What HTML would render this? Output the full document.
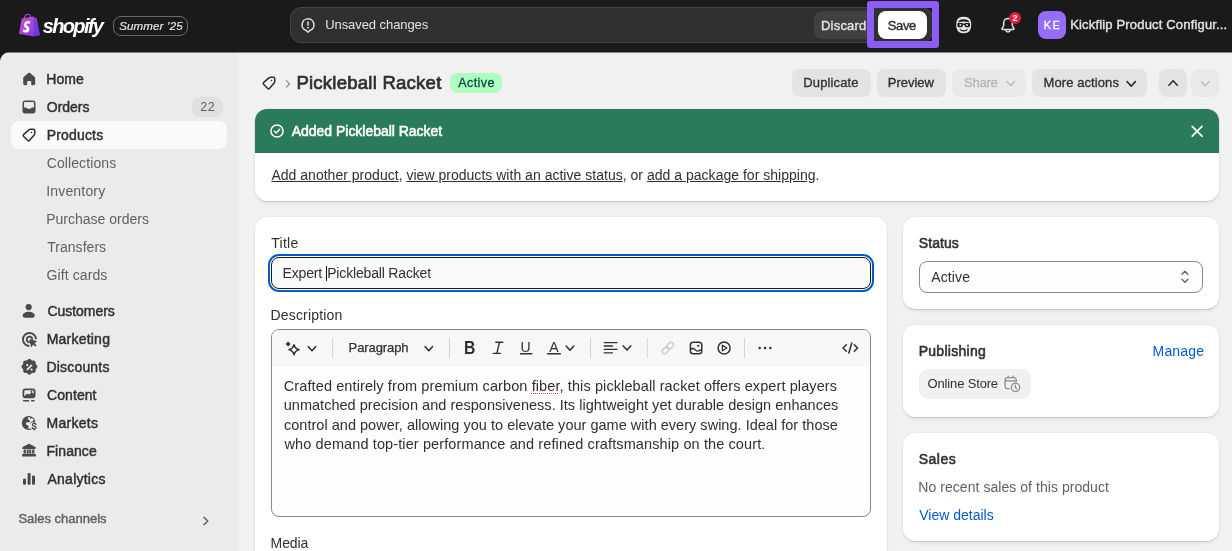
<!DOCTYPE html>
<html lang="en">
<head>
<meta charset="utf-8">
<title>Pickleball Racket · Shopify</title>
<style>
*{box-sizing:border-box;margin:0;padding:0}
html,body{width:1232px;height:551px;overflow:hidden;background:#1a1a1a}
body{font-family:"Liberation Sans",sans-serif;font-size:13px;color:#303030;position:relative}
.abs{position:absolute}
#topbar{will-change:transform;position:absolute;left:0;top:0;width:1232px;height:52px;background:#1a1a1a;z-index:2;box-shadow:0 1px 0 rgba(26,26,26,.5)}
#frame{will-change:transform;position:absolute;left:0;top:52px;width:1232px;height:499px;background:#f1f1f1;border-top-left-radius:10px;overflow:hidden}
#sidebar{position:absolute;left:0;top:0;width:238px;height:499px;background:#ebebeb}
.t{position:absolute;white-space:nowrap;line-height:20px}
.nav{font-size:14px;color:#303030;left:47px;-webkit-text-stroke:.45px #303030}
.bd{left:12px;font-size:14.5px;color:#303030}
.bx{position:absolute;background:#e3e3e3;border-radius:8px;height:28px;top:17px}
.sm{font-size:13px;color:#303030;-webkit-text-stroke:.32px}
.sb{-webkit-text-stroke:.45px}
.sub{font-size:14px;color:#616161;left:47px}
.card{position:absolute;background:#fff;border-radius:12px;box-shadow:0 0 0 .5px rgba(0,0,0,.07),0 1px 0 rgba(0,0,0,.09),0 3px 5px -2px rgba(0,0,0,.1)}
svg{position:absolute;overflow:visible}
</style>
</head>
<body>
<div id="topbar">
  <svg style="left:19px;top:13px" width="21.5" height="24" viewBox="0 0 21.5 24"><defs><linearGradient id="bg1" x1="0" y1="0" x2="1" y2="1"><stop offset="0" stop-color="#d14fc8"/><stop offset=".55" stop-color="#a046dc"/><stop offset="1" stop-color="#6a3be8"/></linearGradient></defs><path d="M5.300 5.200C5.900 2.600 7.600 1 9.300 1.300c1.300.200 2.100 1.400 2.500 3.100" fill="none" stroke="#b24fd0" stroke-width="1.100"/><path d="M2.700 5.600 14.600 3.600 15.800 4.700 17.600 4.900 21 22.200 14.600 23.500 0 20.800Z" fill="url(#bg1)"/><path d="M14.600 3.600 15.800 4.700 17.600 4.900 21 22.200 14.600 23.500Z" fill="#5b2fd6" opacity=".45"/><path d="M11.200 8.600 10.500 10.900s-.8-.4-1.700-.4c-1.400 0-1.500.9-1.500 1.100 0 1.200 3.100 1.600 3.100 4.400 0 2.200-1.400 3.600-3.200 3.600-2.200 0-3.400-1.400-3.400-1.400l.6-2s1.200 1 2.200 1c.6 0 .9-.500.9-.900 0-1.500-2.600-1.600-2.600-4.200 0-2.100 1.500-4.200 4.600-4.200 1.500.100 2.200.600 2.200.600Z" fill="#fff"/></svg>
  <svg style="left:954.3px;top:15px" width="19.4" height="20" viewBox="0 0 20 20" preserveAspectRatio="none"><path fill="#e3e3e3" d="M10 1.700c3.900 0 6.600 1.500 7.300 4.300.5 2 .6 4.700.1 7-.7 3.300-3.200 5.300-7.400 5.300s-6.700-2-7.400-5.300c-.5-2.300-.4-5 .1-7C3.400 3.200 6.100 1.700 10 1.700Z"/><path fill="#1a1a1a" d="M4.300 6.800C5.300 5.100 7.400 4.300 10 4.300s4.700.8 5.700 2.500c.2.350-.1.700-.5.550C13.700 6.800 12 6.500 10 6.500s-3.700.3-5.200.85c-.4.150-.7-.2-.5-.55Z"/><path fill="#1a1a1a" d="M3.500 8.700c0-.45.350-.8.800-.8h3.900c.6 0 1.100.3 1.400.75h.8c.3-.45.800-.75 1.400-.75h3.900c.45 0 .8.350.8.800v1.900c0 .9-.7 1.600-1.600 1.600h-2.400c-.9 0-1.600-.7-1.600-1.600v-.6h-1.800v.6c0 .9-.7 1.600-1.600 1.600H5.100c-.9 0-1.600-.7-1.600-1.600V8.700Z"/><circle cx="6.600" cy="10" r="1.050" fill="#e3e3e3"/><circle cx="13.400" cy="10" r="1.050" fill="#e3e3e3"/><path fill="#1a1a1a" d="M6.300 14.100c1 .8 2.300 1.200 3.700 1.200s2.700-.4 3.700-1.200c.3-.25.750.1.500.450-.9 1.200-2.400 1.900-4.200 1.900s-3.300-.7-4.200-1.900c-.25-.350.200-.7.500-.450Z"/></svg>
  <svg style="left:998px;top:15px" width="20" height="20" viewBox="0 0 20 20" fill="#e3e3e3"><path fill-rule="evenodd" d="M10 2.800a5.100 5.100 0 0 0-5.100 5.100v2.300c0 .45-.15.900-.4 1.250l-1 1.400c-.75 1.050 0 2.500 1.300 2.500h2.250a3 3 0 0 0 5.900 0h2.250c1.300 0 2.050-1.450 1.300-2.500l-1-1.400a2.150 2.150 0 0 1-.4-1.250V7.900A5.100 5.100 0 0 0 10 2.800Zm1.400 12.550H8.600a1.500 1.500 0 0 0 2.800 0ZM6.400 7.900a3.600 3.600 0 0 1 7.200 0v2.300c0 .76.240 1.500.68 2.120l1 1.400a.1.100 0 0 1-.08.130H4.800a.1.100 0 0 1-.08-.13l1-1.400c.44-.62.680-1.360.680-2.120V7.900Z"/></svg>
  <div class="abs" style="left:1009px;top:12px;width:12px;height:12px;background:#e51c3a;border-radius:6px"></div>
  <div class="t" style="left:1012.5px;top:12.5px;font-size:9px;line-height:11px;font-weight:bold;color:#fff">2</div>
  <div class="t" style="left:42.8px;top:14px;font-size:20px;line-height:24px;font-weight:bold;font-style:italic;color:#fff;letter-spacing:-1.67px">shopify</div>
  <div class="abs" style="left:113px;top:16px;width:75px;height:20px;border:1px solid #6a6a6a;border-radius:8px"></div>
  <div class="t" style="left:119.2px;top:16px;font-size:11.5px;font-style:italic;color:#e3e3e3;-webkit-text-stroke:.2px;letter-spacing:0.16px">Summer ’25</div>
  <div class="abs" style="left:290px;top:7px;width:643px;height:36px;background:#303030;border:1px solid #454545;border-radius:11px"></div>
  <svg style="left:298px;top:15px" width="20" height="20" viewBox="0 0 20 20" fill="#e3e3e3"><path d="M10 6.250a.75.75 0 0 1 .75.750v3a.75.75 0 0 1-1.500 0V7a.75.75 0 0 1 .75-.750Z"/><circle cx="10" cy="12.600" r=".95"/><path fill-rule="evenodd" d="M3.300 9.800a6.700 6.700 0 1 1 9.100 6.250l-1.650 1.500a1.100 1.100 0 0 1-1.500 0l-1.650-1.500A6.700 6.700 0 0 1 3.300 9.800Zm6.700-5.200a5.200 5.200 0 0 0-1.800 10.080l.27.100L10 16.200l1.530-1.420.27-.1A5.200 5.200 0 0 0 10 4.600Z"/></svg>
  <div class="t" style="left:325.2px;top:15px;font-size:13px;color:#e3e3e3;letter-spacing:-0.07px">Unsaved changes</div>
  <div class="abs" style="left:814px;top:11px;width:60px;height:28px;background:#404040;border-radius:8px"></div>
  <div class="t" style="left:821.0px;top:16px;font-size:13px;color:#e3e3e3;-webkit-text-stroke:.4px;letter-spacing:0.21px">Discard</div>
  <div class="abs" style="left:867px;top:1px;width:72px;height:47px;border:7px solid #8b5cf6;border-radius:3px"></div>
  <div class="abs" style="left:878px;top:11px;width:48.5px;height:28px;background:#fff;border-radius:8px"></div>
  <div class="t" style="left:887.8px;top:16px;font-size:13px;color:#303030;-webkit-text-stroke:.4px;letter-spacing:-0.39px">Save</div>
  <div class="abs" style="left:1038px;top:11px;width:28px;height:28px;background:#956dfb;border-radius:8px"></div>
  <div class="t" style="left:1043.8px;top:14.5px;font-size:11px;color:#fff;-webkit-text-stroke:.3px;letter-spacing:1.37px">KE</div>
  <div class="t" style="left:1070.2px;top:15px;font-size:13px;color:#e3e3e3;-webkit-text-stroke:.4px;letter-spacing:0.17px">Kickflip Product Configur...</div>
</div>
<div id="frame">
 <div id="sidebar">
  <div class="abs" style="left:11px;top:69px;width:216px;height:28px;background:#fafafa;border-radius:8px"></div>
<svg style="left:19.8px;top:17.5px" width="18.4" height="18.4" viewBox="0 0 20 20" fill="#4a4a4a" ><path d="M10.95 3.35a1.45 1.45 0 0 0-1.9 0L4 7.7a1.5 1.5 0 0 0-.5 1.1v5.95c0 .97.78 1.75 1.75 1.75h1.5c.55 0 1-.45 1-1v-2.25c0-.69.56-1.25 1.25-1.25h2c.69 0 1.25.56 1.25 1.25v2.25c0 .55.45 1 1 1h1.5c.97 0 1.75-.78 1.75-1.75V8.8a1.5 1.5 0 0 0-.5-1.1l-5.05-4.35Z"/></svg>
<svg style="left:19px;top:45px" width="20" height="20" viewBox="0 0 20 20" fill="#4a4a4a" ><path fill-rule="evenodd" d="M6.25 3.5h7.5a2.75 2.75 0 0 1 2.75 2.75v7.5a2.75 2.75 0 0 1-2.75 2.75h-7.5a2.75 2.75 0 0 1-2.75-2.75v-7.5a2.75 2.75 0 0 1 2.75-2.75ZM5 6.25v4.25h1.9c.4 0 .75.2.95.55l.25.45c.1.15.25.25.45.25h2.9c.2 0 .35-.1.45-.25l.25-.45c.2-.35.55-.55.95-.55h1.9v-4.25c0-.69-.56-1.25-1.25-1.25h-7.5c-.69 0-1.25.56-1.25 1.25Z"/></svg>
<svg style="left:19px;top:73px" width="20" height="20" viewBox="0 0 20 20" fill="#303030" ><path d="M13.257 7.491a.75.75 0 1 1-1.5 0 .75.75 0 0 1 1.5 0Z"/><path fill-rule="evenodd" d="M11.257 3.5c-.579 0-1.138.211-1.572.594l-5.38 4.747a2.25 2.25 0 0 0-.124 3.27l3.685 3.718a2.25 2.25 0 0 0 3.285-.096l4.758-5.377a2.375 2.375 0 0 0 .596-1.574v-2.907a2.375 2.375 0 0 0-2.375-2.375h-2.873Zm-.58 1.719a.875.875 0 0 1 .58-.219h2.873c.483 0 .875.392.875.875v2.907a.875.875 0 0 1-.22.58l-4.758 5.377a.75.75 0 0 1-1.095.032l-3.685-3.718a.75.75 0 0 1 .041-1.09l5.39-4.744Z"/></svg>
<svg style="left:18.3px;top:248.1px" width="21.4" height="21.4" viewBox="0 0 20 20" fill="#4a4a4a" ><circle cx="10" cy="6.6" r="2.9"/><path d="M4.3 14.6c0-2 2.4-3.7 5.7-3.7s5.7 1.7 5.7 3.7c0 1.1-.9 2-2 2H6.3a2 2 0 0 1-2-2Z"/></svg>
<svg style="left:18.7px;top:276.7px" width="21" height="21" viewBox="0 0 20 20" fill="#4a4a4a" ><g fill="none" stroke="#4a4a4a" stroke-width="1.8" stroke-linecap="round"><path d="M16.2 9.2A6.25 6.25 0 1 0 9.2 16.2"/><path d="M12.7 9.3a2.75 2.75 0 1 0-3.4 3.4"/></g><path d="M10.6 10.1a.4.4 0 0 1 .5-.5l5.7 2a.4.4 0 0 1 .05.73l-2.2 1.1 1.75 1.75a.5.5 0 0 1 0 .7l-.55.55a.5.5 0 0 1-.7 0l-1.75-1.75-1.1 2.2a.4.4 0 0 1-.73-.05l-2-5.7Z"/></svg>
<svg style="left:17.6px;top:303.6px" width="22.8" height="22.8" viewBox="0 0 20 20" fill="#4a4a4a" ><path fill-rule="evenodd" d="M11.6 3.2a2.2 2.2 0 0 0-3.2 0l-.4.45a.7.7 0 0 1-.56.23l-.6-.03a2.2 2.2 0 0 0-2.3 2.3l.03.6a.7.7 0 0 1-.23.56l-.45.4a2.2 2.2 0 0 0 0 3.25l.45.4a.7.7 0 0 1 .23.56l-.03.6a2.2 2.2 0 0 0 2.3 2.3l.6-.03a.7.7 0 0 1 .56.23l.4.45a2.2 2.2 0 0 0 3.25 0l.4-.45a.7.7 0 0 1 .56-.23l.6.03a2.2 2.2 0 0 0 2.3-2.3l-.03-.6a.7.7 0 0 1 .23-.56l.45-.4a2.2 2.2 0 0 0 0-3.25l-.45-.4a.7.7 0 0 1-.23-.56l.03-.6a2.2 2.2 0 0 0-2.3-2.3l-.6.03a.7.7 0 0 1-.56-.23l-.4-.45ZM12.3 7.7a.75.75 0 0 1 0 1.06l-3.5 3.5a.75.75 0 0 1-1.06-1.06l3.5-3.5a.75.75 0 0 1 1.06 0ZM8.1 9a.95.95 0 1 0 0-1.9.95.95 0 0 0 0 1.9Zm3.8 3.9a.95.95 0 1 0 0-1.9.95.95 0 0 0 0 1.9Z"/></svg>
<svg style="left:19px;top:333px" width="20" height="20" viewBox="0 0 20 20" fill="#4a4a4a" ><path fill-rule="evenodd" d="M6.2 3.4A2.7 2.7 0 0 0 3.5 6.1v4.4a2.7 2.7 0 0 0 2.7 2.7h7.6a2.7 2.7 0 0 0 2.7-2.7V6.1a2.7 2.7 0 0 0-2.7-2.7H6.2ZM5.3 6.3a1.1 1.1 0 0 1 1.1-1.1h7.2a1.1 1.1 0 0 1 1.1 1.1v2.6l-1.3-1.1a1.1 1.1 0 0 0-1.450.04L10 9.7l-.800-.650a1.1 1.1 0 0 0-1.400.02L5.3 11.2V6.3Zm7.2 1.1a.900.9 0 1 0 0-1.800.900.9 0 0 0 0 1.8Z"/><path d="M4.7 14.9h4.9a.800.8 0 0 1 0 1.6H4.7a.800.8 0 0 1 0-1.6Zm8 0h2.2a.800.8 0 0 1 0 1.6h-2.2a.800.8 0 0 1 0-1.6Z"/></svg>
<svg style="left:19px;top:361px" width="20" height="20" viewBox="0 0 20 20" fill="#4a4a4a" ><circle cx="9.7" cy="10" r="6.9"/><path fill="#ebebeb" d="M9 4.6c-.500 1.2-.100 2 1 2.3 1 .300 1.300.9 1 1.6-.400.8-1.300.9-2.200.8-1-.100-1.700.4-1.8 1.3-.100.900.5 1.5 1.4 1.7 1 .200 1.400.9 1.2 1.8l-.500 1.7c.800.1 1.7 0 2.5-.300V9.5l3.5-2.5A6 6 0 0 0 12.5 4.9l-.600 1-.900-.300.3-1.2A6 6 0 0 0 9 4.6Z"/><circle cx="15.2" cy="13" r="4.3" fill="#ebebeb"/><path d="M15.2 8.9a.650.65 0 0 1 .650.65v.300c.850.15 1.500.7 1.7 1.45a.650.65 0 1 1-1.250.35c-.100-.350-.450-.600-1.1-.600-.800 0-1.100.35-1.100.65 0 .300.150.55 1.250.8 1.200.25 2.250.8 2.25 2.1 0 1-.700 1.7-1.75 1.9v.300a.650.65 0 0 1-1.3 0v-.300c-.950-.150-1.65-.750-1.85-1.6a.650.65 0 1 1 1.25-.300c.100.400.500.7 1.250.700.85 0 1.15-.400 1.15-.750 0-.350-.150-.600-1.25-.850-1.15-.250-2.25-.750-2.25-2.05 0-.950.7-1.65 1.7-1.85v-.300a.650.65 0 0 1 .650-.650Z"/></svg>
<svg style="left:19px;top:389px" width="20" height="20" viewBox="0 0 20 20" fill="#4a4a4a" ><path d="M9.4 3a1.35 1.35 0 0 1 1.2 0l5.4 2.7c.500.250.750.700.75 1.2 0 .650-.500 1.1-1.15 1.1H4.4c-.650 0-1.15-.450-1.15-1.1 0-.500.25-.950.75-1.2L9.4 3Z"/><path d="M4.6 8.6h2.25v3.8H4.6zM7.75 8.6h2v3.8h-2zM10.25 8.6h2v3.8h-2zM13.15 8.6h2.25v3.8h-2.25z"/><path d="M4.3 12.7h11.4c.700 0 1.250.55 1.25 1.25v.700a.900.9 0 0 1-.900.9H3.95a.900.9 0 0 1-.900-.900v-.700c0-.700.55-1.25 1.25-1.25Z"/></svg>
<svg style="left:19px;top:417px" width="20" height="20" viewBox="0 0 20 20" fill="#4a4a4a" ><rect x="4" y="9.6" width="3" height="6.1" rx="1.2"/><rect x="8.6" y="4" width="3" height="11.7" rx="1.2"/><rect x="13" y="6.6" width="3" height="9.1" rx="1.2"/></svg>
<svg style="left:195.7px;top:458.8px" width="20" height="20" viewBox="0 0 20 20" fill="#4a4a4a" ><path fill="none" stroke="#616161" stroke-width="1.5" stroke-linecap="round" stroke-linejoin="round" d="M8 6.25 11.75 10 8 13.75"/></svg>
  <div class="t nav" style="left:46.3px;top:17px;letter-spacing:0.04px">Home</div>
  <div class="t nav" style="left:46.8px;top:45px;letter-spacing:-0.04px">Orders</div>
  <div class="abs" style="left:192px;top:45px;width:31px;height:20px;background:#e0e0e0;border-radius:8px"></div>
  <div class="t" style="left:200.2px;top:45px;font-size:12.5px;color:#616161;letter-spacing:.7px">22</div>
  <div class="t nav" style="left:46.7px;top:73px;letter-spacing:0.17px">Products</div>
  <div class="t sub" style="left:46.7px;top:101px;letter-spacing:0.10px">Collections</div>
  <div class="t sub" style="left:46.2px;top:129px;letter-spacing:0.18px">Inventory</div>
  <div class="t sub" style="left:46.2px;top:157px">Purchase orders</div>
  <div class="t sub" style="left:47.2px;top:185px;letter-spacing:0.04px">Transfers</div>
  <div class="t sub" style="left:46.6px;top:213px;letter-spacing:0.09px">Gift cards</div>
  <div class="t nav" style="left:47.4px;top:249px;letter-spacing:-0.04px">Customers</div>
  <div class="t nav" style="left:46.7px;top:277px;letter-spacing:0.22px">Marketing</div>
  <div class="t nav" style="left:46.5px;top:305px;letter-spacing:0.18px">Discounts</div>
  <div class="t nav" style="left:47.0px;top:333px;letter-spacing:0.08px">Content</div>
  <div class="t nav" style="left:46.5px;top:361px;letter-spacing:0.28px">Markets</div>
  <div class="t nav" style="left:46.5px;top:389px;letter-spacing:0.06px">Finance</div>
  <div class="t nav" style="left:47.5px;top:417px;letter-spacing:0.24px">Analytics</div>
  <div class="t" style="left:18.4px;top:457px;font-size:13px;color:#616161;-webkit-text-stroke:.4px">Sales channels</div>
 </div>
 <div id="main" class="abs" style="left:238px;top:0;width:994px;height:499px">
  <!-- page header (coords relative to #main: x-238, y-52) -->
  <div class="t" style="left:58.4px;top:19px;font-size:18.6px;color:#303030;line-height:24px;-webkit-text-stroke:.7px;letter-spacing:0.21px">Pickleball Racket</div>
  <div class="abs" style="left:212px;top:21px;width:52px;height:20px;background:#affebf;border-radius:8px"></div>
  <div class="t" style="left:220.3px;top:21px;font-size:12.5px;color:#014b40;-webkit-text-stroke:.3px #014b40;letter-spacing:0.40px">Active</div>
  <div class="bx" style="left:554px;width:79px"></div><div class="t sm" style="left:565.3px;top:21px;letter-spacing:0.12px">Duplicate</div>
  <div class="bx" style="left:639px;width:69px"></div><div class="t sm" style="left:649.8px;top:21px;letter-spacing:-0.02px">Preview</div>
  <div class="bx" style="left:714px;width:74px;background:#e9e9e9"></div><div class="t sm" style="left:726.1px;top:21px;color:#b5b5b5;letter-spacing:-0.27px">Share</div>
  <div class="bx" style="left:794px;width:115px"></div><div class="t sm" style="left:805.6px;top:21px;letter-spacing:0.08px">More actions</div>
  <div class="bx" style="left:921px;width:28px"></div>
  <div class="bx" style="left:953px;width:28px;background:#e9e9e9"></div>
  <svg style="left:21.2px;top:21px" width="20" height="20" viewBox="0 0 20 20" fill="#303030"><path d="M13.257 7.491a.75.75 0 1 1-1.5 0 .75.75 0 0 1 1.5 0Z"/><path fill-rule="evenodd" d="M11.257 3.5c-.579 0-1.138.211-1.572.594l-5.38 4.747a2.25 2.25 0 0 0-.124 3.27l3.685 3.718a2.25 2.25 0 0 0 3.285-.096l4.758-5.377a2.375 2.375 0 0 0 .596-1.574v-2.907a2.375 2.375 0 0 0-2.375-2.375h-2.873Zm-.58 1.719a.875.875 0 0 1 .58-.219h2.873c.483 0 .875.392.875.875v2.907a.875.875 0 0 1-.22.58l-4.758 5.377a.75.75 0 0 1-1.095.032l-3.685-3.718a.75.75 0 0 1 .041-1.09l5.39-4.744Z"/></svg>
  <svg style="left:0;top:0" width="1" height="1"><path d="M48.4 28.7 51.6 31.9 48.4 35.1" fill="none" stroke="#8a8a8a" stroke-width="1.2" stroke-linecap="round" stroke-linejoin="round"/></svg>
  <svg style="left:0;top:0" width="1" height="1"><path d="M769 29.6 772.8 33.6 776.6 29.6" fill="none" stroke="#bdbdbd" stroke-width="1.4" stroke-linecap="round" stroke-linejoin="round"/></svg>
  <svg style="left:0;top:0" width="1" height="1"><path d="M889 29.6 893.2 34.1 897.4 29.6" fill="none" stroke="#303030" stroke-width="1.6" stroke-linecap="round" stroke-linejoin="round"/></svg>
  <svg style="left:0;top:0" width="1" height="1"><path d="M930.9 33.2 935.1 28.7 939.3 33.2" fill="none" stroke="#303030" stroke-width="1.6" stroke-linecap="round" stroke-linejoin="round"/></svg>
  <svg style="left:0;top:0" width="1" height="1"><path d="M963.4 29.8 967.2 33.8 971 29.8" fill="none" stroke="#bdbdbd" stroke-width="1.4" stroke-linecap="round" stroke-linejoin="round"/></svg>
  <!-- banner -->
  <div class="card" style="left:17px;top:57px;width:964px;height:92px;overflow:hidden">
    <div class="abs" style="left:0;top:0;width:964px;height:44px;background:#2a7b5c"></div>
    <svg style="left:12px;top:12px" width="20" height="20" viewBox="0 0 20 20"><circle cx="10" cy="10" r="6.1" fill="none" stroke="#fff" stroke-width="1.5"/><path d="M7.4 10.2 9.2 12 12.700 8.300" fill="none" stroke="#fff" stroke-width="1.5" stroke-linecap="round" stroke-linejoin="round"/></svg>
    <svg style="left:932px;top:12px" width="20" height="20" viewBox="0 0 20 20"><path d="M5.200 5.300 15 15.100M15 5.300 5.200 15.100" fill="none" stroke="#fff" stroke-width="1.700" stroke-linecap="round"/></svg>
    <div class="t" style="left:36.8px;top:12px;font-size:14px;color:#fff;-webkit-text-stroke:.55px;letter-spacing:-0.03px">Added Pickleball Racket</div>
    <div class="t" style="left:16.4px;top:56px;font-size:14px;color:#303030;letter-spacing:0.02px"><u>Add another product</u>, <u>view products with an active status</u>, or <u>add a package for shipping</u>.</div>
  </div>
  <!-- title/description card -->
  <div class="card" style="left:17px;top:165px;width:632px;height:360px">
    <div class="t" style="left:16.2px;top:16px;font-size:14px;letter-spacing:0.30px">Title</div>
    <div class="abs" style="left:13px;top:37px;width:606px;height:38px;border:2px solid #005bd3;border-radius:11px"></div>
    <div class="abs" style="left:16px;top:40px;width:600px;height:32px;border:1px solid #1a1a1a;border-radius:8px;background:#fafafa"></div>
    <div class="t" style="left:27.5px;top:46px;font-size:14px;letter-spacing:-0.16px">Expert </div>
    <div class="t" style="left:72.2px;top:46px;font-size:14px;letter-spacing:-0.17px">Pickleball Racket</div>
    <div class="abs" style="left:70.8px;top:48.5px;width:1.2px;height:15px;background:#111"></div>
    <div class="t" style="left:15.5px;top:88px;font-size:14px;letter-spacing:0.17px">Description</div>
    <div class="abs" style="left:16px;top:112px;width:600px;height:188px;border:1px solid #8a8a8a;border-radius:8px;background:#fdfdfd;overflow:hidden">
      <div class="abs" style="left:0;top:0;width:598px;height:36px;background:#f7f7f7"></div>
<!--tb-->
      <svg style="left:0;top:0" width="598" height="36" viewBox="0 0 598 36">
<path d="M60.6 8V28" stroke="#d4d4d4" stroke-width="1"/><path d="M177.5 8V28" stroke="#d4d4d4" stroke-width="1"/><path d="M318.5 8V28" stroke="#d4d4d4" stroke-width="1"/><path d="M375.4 8V28" stroke="#d4d4d4" stroke-width="1"/><path d="M472.5 8V28" stroke="#d4d4d4" stroke-width="1"/><path d="M22.00 14.80Q23.00 18.80 27.00 19.80Q23.00 20.80 22.00 24.80Q21.00 20.80 17.00 19.80Q21.00 18.80 22.00 14.80Z" fill="none" stroke="#303030" stroke-width="1.5" stroke-linejoin="round"/><path d="M16.10 11.60Q17.23 12.98 18.60 14.10Q17.23 15.23 16.10 16.60Q14.98 15.23 13.60 14.10Q14.98 12.98 16.10 11.60Z" fill="#303030"/><path d="M36.2 16.5 40.0 20.7 43.8 16.5" fill="none" stroke="#303030" stroke-width="1.5" stroke-linecap="round" stroke-linejoin="round"/><path d="M153.0 16.5 156.8 20.7 160.6 16.5" fill="none" stroke="#303030" stroke-width="1.5" stroke-linecap="round" stroke-linejoin="round"/><path d="M223.8 12.2h7M221.4 23.4h7M227.6 12.2 224.8 23.4" fill="none" stroke="#303030" stroke-width="1.4" stroke-linecap="round"/><path d="M248.6 23.8h11.2M275.6 23.8h12.8" stroke="#303030" stroke-width="1.4" stroke-linecap="round"/><path d="M294.2 16.1 298.0 20.3 301.8 16.1" fill="none" stroke="#303030" stroke-width="1.5" stroke-linecap="round" stroke-linejoin="round"/><path d="M332.2 12.6h12.8" stroke="#303030" stroke-width="1.3" stroke-linecap="round"/><path d="M332.2 16.0h8.3" stroke="#303030" stroke-width="1.3" stroke-linecap="round"/><path d="M332.2 19.4h12.8" stroke="#303030" stroke-width="1.3" stroke-linecap="round"/><path d="M332.2 22.8h8.3" stroke="#303030" stroke-width="1.3" stroke-linecap="round"/><path d="M351.2 15.9 355.0 20.1 358.8 15.9" fill="none" stroke="#303030" stroke-width="1.5" stroke-linecap="round" stroke-linejoin="round"/><g transform="translate(395.8 18.0) rotate(-45)" fill="none" stroke="#cccccc" stroke-width="1.4"><rect x="-7" y="-2.4" width="7.6" height="4.8" rx="2.4"/><rect x="-.6" y="-2.4" width="7.6" height="4.8" rx="2.4"/></g><rect x="418.4" y="12.3" width="11.4" height="11.4" rx="2.8" fill="none" stroke="#303030" stroke-width="1.5"/><circle cx="426.2" cy="15.8" r="1.1" fill="#303030"/><path d="M418.6 19.6c1.5-1.4 3-1.4 4.3-.2 1.3 1.2 2.5 2.3 3.6 1.6 1.1-.7 2.1-1.600 3.2-.6" fill="none" stroke="#303030" stroke-width="1.4"/><circle cx="452.1" cy="18.0" r="6" fill="none" stroke="#303030" stroke-width="1.5"/><path d="M450.4 15.2v5.6l4.500-2.8Z" fill="none" stroke="#303030" stroke-width="1.3" stroke-linejoin="round"/><circle cx="487.7" cy="17.9" r="1.25" fill="#303030"/><circle cx="493.0" cy="17.9" r="1.25" fill="#303030"/><circle cx="498.3" cy="17.9" r="1.25" fill="#303030"/><path d="M574.3 14.7l-3.3 3.3 3.3 3.3M582.3 14.7l3.3 3.3-3.3 3.3M579.8 13.0l-3 10" fill="none" stroke="#303030" stroke-width="1.5" stroke-linecap="round" stroke-linejoin="round"/></svg>
      <div class="t" style="left:192.3px;top:8.4px;font-size:17.5px;font-weight:bold;color:#303030;transform:scaleX(.9);transform-origin:0 0">B</div>
      <div class="t" style="left:248.5px;top:6.7px;font-size:14px;color:#303030">U</div>
      <div class="t" style="left:277.3px;top:6.7px;font-size:14px;color:#303030">A</div>
<!--/tb-->
      <div class="t" style="left:76.6px;top:8px;font-size:13px;color:#303030;letter-spacing:-0.09px;-webkit-text-stroke:.25px">Paragraph</div>
      <div class="t bd" style="left:11.8px;top:46px;letter-spacing:0.10px">Crafted entirely from premium carbon fiber, this pickleball racket offers expert players</div>
      <div class="t bd" style="left:11.7px;top:65px;letter-spacing:0.03px">unmatched precision and responsiveness. Its lightweight yet durable design enhances</div>
      <div class="t bd" style="left:12.0px;top:84.5px;letter-spacing:0.02px">control and power, allowing you to elevate your game with every swing. Ideal for those</div>
      <div class="t bd" style="left:12.5px;top:103.5px;letter-spacing:0.11px">who demand top-tier performance and refined craftsmanship on the court.</div>
      <div class="abs" style="left:259px;top:63px;width:27px;height:0;border-top:1.5px dotted #e0383e"></div>
    </div>
    <div class="t" style="left:15.6px;top:316px;font-size:14px;letter-spacing:-0.13px">Media</div>
  </div>
  <!-- right column -->
  <div class="card" style="left:665px;top:165px;width:316px;height:92px">
    <div class="t" style="left:15.8px;top:16px;font-size:14px;-webkit-text-stroke:.55px;letter-spacing:0.07px">Status</div>
    <div class="abs" style="left:16px;top:44px;width:284px;height:32px;border:1px solid #8a8a8a;border-radius:8px;background:#fdfdfd"></div>
    <div class="t" style="left:28.2px;top:50px;font-size:14px;letter-spacing:0.14px">Active</div>
    <svg style="left:0;top:0" width="1" height="1"><path d="M278.9 57.2 281.9 54.3 284.9 57.2M278.9 62.3 281.9 65.2 284.9 62.3" fill="none" stroke="#616161" stroke-width="1.3" stroke-linecap="round" stroke-linejoin="round"/></svg>
  </div>
  <div class="card" style="left:665px;top:273px;width:316px;height:92px">
    <div class="t" style="left:15.7px;top:16px;font-size:14px;-webkit-text-stroke:.55px;letter-spacing:0.28px">Publishing</div>
    <div class="t" style="left:249.6px;top:16px;font-size:14px;color:#005bd3;letter-spacing:0.15px">Manage</div>
    <div class="abs" style="left:16px;top:44px;width:112px;height:30px;background:#f1f1f1;border-radius:9px"></div>
    <div class="t" style="left:24.6px;top:49px;font-size:13px;letter-spacing:-0.16px">Online Store</div>
    <svg style="left:0;top:0" width="1" height="1"><g fill="none" stroke="#8a8a8a" stroke-width="1.25" stroke-linecap="round" stroke-linejoin="round"><path d="M106.2 63.7H104.6a2.5 2.5 0 0 1-2.5-2.5V55.2a2.5 2.5 0 0 1 2.5-2.5h6.2a2.5 2.5 0 0 1 2.5 2.5v1.4M102.3 55.9h10.8M105.2 51.2v1.4M110.2 51.2v1.4"/><circle cx="112.5" cy="62.3" r="4.2"/><path d="M112.3 60.2v2.2l1.4 1.3"/></g></svg>
  </div>
  <div class="card" style="left:665px;top:381px;width:316px;height:108px">
    <div class="t" style="left:15.8px;top:16px;font-size:14px;-webkit-text-stroke:.55px;letter-spacing:0.46px">Sales</div>
    <div class="t" style="left:15.3px;top:44px;font-size:14px;color:#616161;letter-spacing:0.05px">No recent sales of this product</div>
    <div class="t" style="left:16.2px;top:72px;font-size:14px;color:#005bd3">View details</div>
  </div>
 </div>
</div>
</body>
</html>
